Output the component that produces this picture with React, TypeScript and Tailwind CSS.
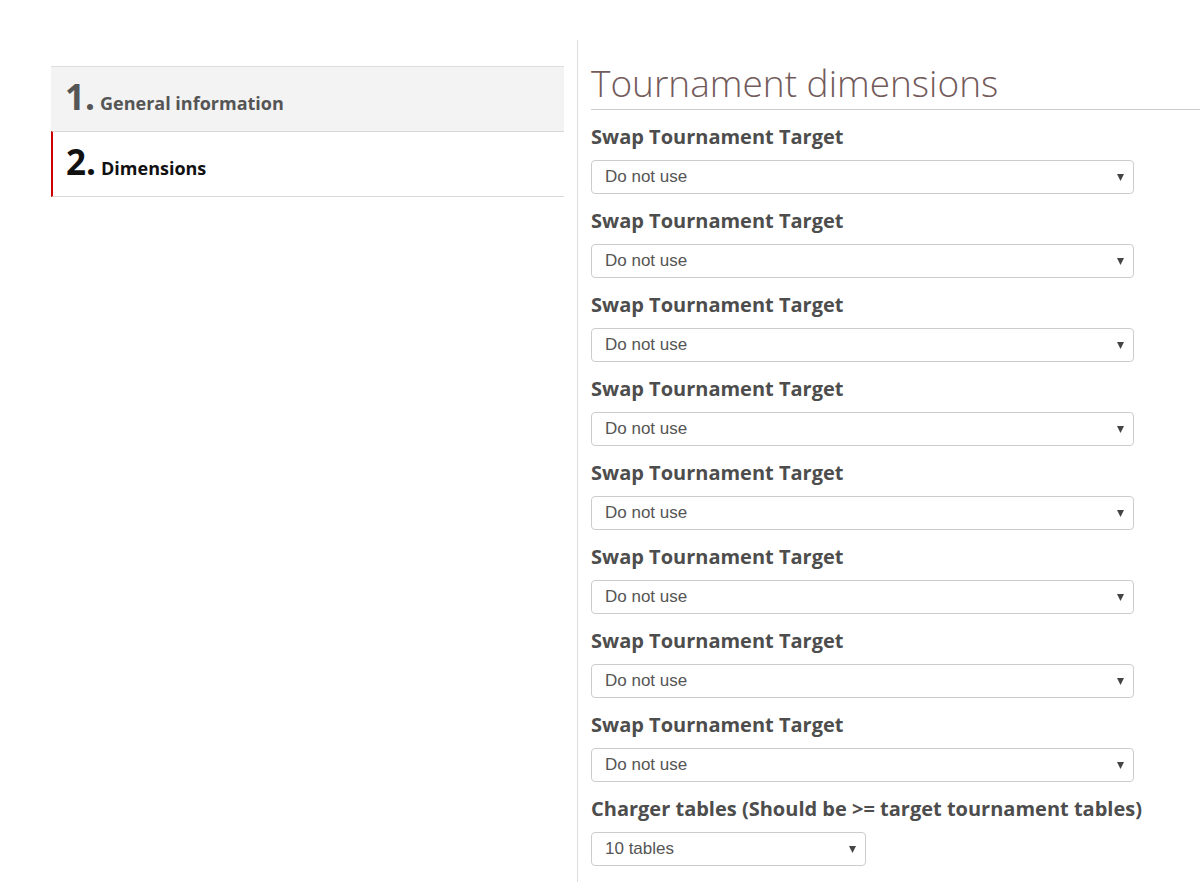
import React from "react";

const os = { fontFamily: '"Open Sans", "Noto Sans", sans-serif' };
const ar = { fontFamily: '"Liberation Sans", Arial, sans-serif' };

function FakeSelect({ value, wide = true }: { value: string; wide?: boolean }) {
  return (
    <div
      className={`${wide ? "w-[543px]" : "w-[275px]"} h-[34px] border border-[#cccccc] rounded-[4px] bg-white flex items-center justify-between pl-[13px] pr-[9px]`}
    >
      <span className="text-[17px] text-[#555555]" style={ar}>
        {value}
      </span>
      <svg width="7" height="7" viewBox="0 0 7 7" className="mt-[1px]">
        <polygon points="0,0 7,0 3.5,7" fill="#444444" />
      </svg>
    </div>
  );
}

function Group({ label, value, wide = true }: { label: string; value: string; wide?: boolean }) {
  return (
    <div className="mb-[14px]">
      <div className="text-[20px] leading-[26px] font-bold text-[#4d4d4d] mb-[10px] whitespace-nowrap" style={os}>
        {label}
      </div>
      <FakeSelect value={value} wide={wide} />
    </div>
  );
}

export default function App() {
  const swaps = Array.from({ length: 8 });
  return (
    <div className="w-[1200px] h-[882px] bg-white overflow-hidden pt-[40px]" style={os}>
      <div className="flex">
        <div className="w-[564px] pl-[51px] pt-[26px] shrink-0">
          <div className="border-t border-[#dddddd] bg-[#f3f3f3] h-[65px] pl-[14px] pt-[12px] flex items-baseline">
            <span className="text-[35px] leading-[35px] font-bold text-[#555555]">1.</span>
            <span className="ml-[5px] text-[18px] font-bold text-[#555555]">General information</span>
          </div>
          <div className="border-t border-b border-[#d8d8d8] border-l-2 border-l-[#cc0000] h-[66px] pl-[13px] pt-[12px] flex items-baseline">
            <span className="text-[35px] leading-[35px] font-bold text-[#111111]">2.</span>
            <span className="ml-[5px] text-[18px] font-bold text-[#111111]">Dimensions</span>
          </div>
        </div>
        <div className="ml-[13px] border-l border-[#dddddd] pl-[13px] flex-1 min-h-[842px]">
          <div className="pt-[22px] pb-[5px] border-b border-[#cccccc] mb-[14px]">
            <h1 className="text-[37px] leading-[42px] font-light text-[#735b5b] whitespace-nowrap">Tournament dimensions</h1>
          </div>
          {swaps.map((_, i) => (
            <Group key={i} label="Swap Tournament Target" value="Do not use" />
          ))}
          <Group label="Charger tables (Should be >= target tournament tables)" value="10 tables" wide={false} />
        </div>
      </div>
    </div>
  );
}
